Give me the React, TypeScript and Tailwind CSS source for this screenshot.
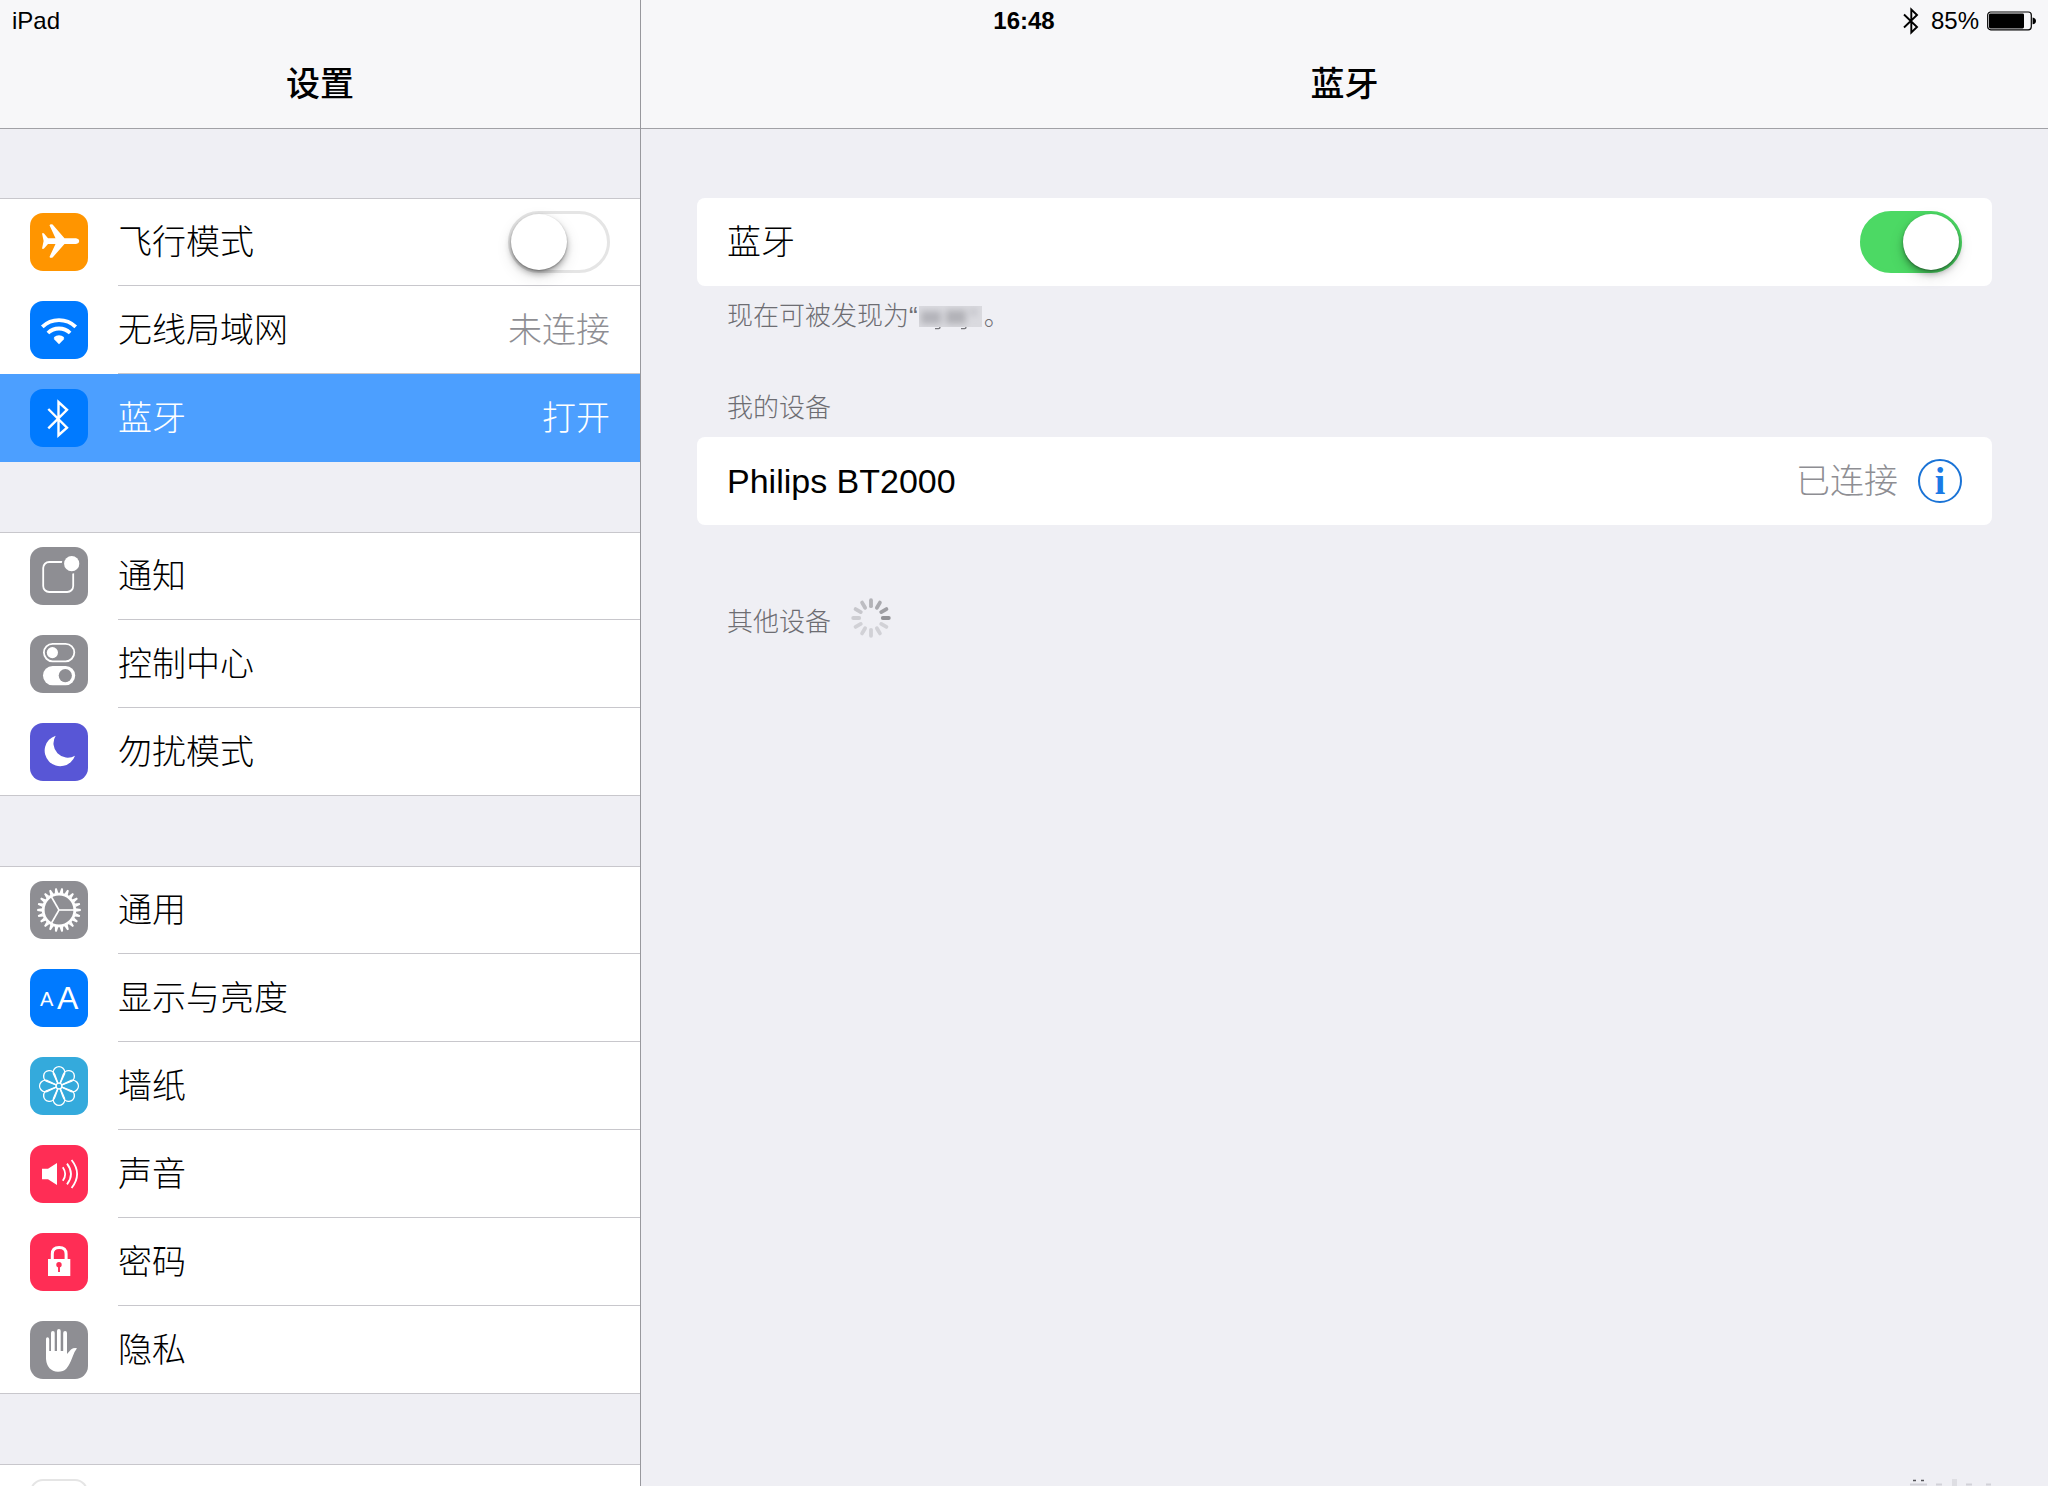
import React, { useState, type ReactNode } from 'react';

const fontStack = "font-['Liberation_Sans','Noto_Sans_CJK_SC',sans-serif]";

function PlaneIcon() {
  return (
    <path
      fill="#fff"
      d="M12 20.3H13.8L18 25.2H25.5L19.5 12.2Q20.5 10.6 22.6 11.6L34.5 25.2H46Q49.2 25.8 49.2 28Q49.2 30.4 46 30.9H34.5L22.6 44.5Q20.5 45.4 19.5 43.9L25.5 30.9H18L13.8 35.8H12L13.6 28Z"
    />
  );
}

function WifiIcon() {
  return (
    <g fill="none" stroke="#fff" strokeWidth="3.8">
      <path d="M12.3 25.9A24 24 0 0 1 45.7 25.9" />
      <path d="M17.9 32A16 16 0 0 1 40.1 32" />
      <path d="M23.6 37.8A8 8 0 0 1 34.4 37.8L29 43.3Z" fill="#fff" stroke="none" />
      <path d="M24.4 37A8 8 0 0 1 33.6 37" strokeWidth="2" />
    </g>
  );
}

function BluetoothIcon() {
  return (
    <path
      fill="none"
      stroke="#fff"
      strokeWidth="2.4"
      d="M18.3 20L37 38.6L28.5 46.2V13L37 20.8L18.3 39.4"
    />
  );
}

function NotificationIcon() {
  return (
    <g>
      <rect x="13.2" y="15" width="30" height="30" rx="6" fill="none" stroke="#fff" strokeWidth="1.8" />
      <circle cx="41.7" cy="16.7" r="10" fill="#8e8e93" />
      <circle cx="41.7" cy="16.7" r="7.6" fill="#fff" />
    </g>
  );
}

function ControlIcon() {
  return (
    <g>
      <rect x="13.9" y="8.9" width="30.4" height="17.4" rx="8.7" fill="none" stroke="#fff" strokeWidth="1.8" />
      <circle cx="22.4" cy="17.6" r="5.6" fill="#fff" />
      <rect x="13" y="31" width="32.2" height="19.2" rx="9.6" fill="#fff" />
      <circle cx="35.3" cy="40.6" r="6.6" fill="#8e8e93" />
    </g>
  );
}

function MoonIcon() {
  return <path fill="#fff" d="M25.7 12.7A14.3 14.3 0 0 0 45 32.7A15.6 15.6 0 1 1 25.7 12.7Z" />;
}

function GearIcon() {
  return (
    <g stroke="#fff" fill="none">
      <circle cx="29" cy="29" r="15.8" strokeWidth="2.8" />
      {Array.from({ length: 22 }, (_, i) => (
        <path
          key={i}
          d="M45.8 27.2L50.8 28.1V29.9L45.8 30.8Z"
          fill="#fff"
          stroke="none"
          transform={`rotate(${(i * 360) / 22} 29 29)`}
        />
      ))}
      {[0, 120, 240].map((a) => (
        <path key={a} d="M29 29H44" strokeWidth="1.6" transform={`rotate(${a} 29 29)`} />
      ))}
    </g>
  );
}

function DisplayIcon() {
  return (
    <g fill="#fff" className="font-['Liberation_Sans',sans-serif]">
      <text x="10" y="37" fontSize="20">A</text>
      <text x="27" y="40" fontSize="32">A</text>
    </g>
  );
}

function FlowerIcon() {
  return (
    <g stroke="#fff" fill="none" strokeWidth="1.4">
      <circle cx="29" cy="29" r="2.9" />
      {Array.from({ length: 8 }, (_, i) => (
        <path
          key={i}
          d="M27.8 26.2L24.2 18.4A5.7 5.7 0 1 1 33.8 18.4L30.2 26.2"
          transform={`rotate(${i * 45} 29 29)`}
        />
      ))}
    </g>
  );
}

function SoundIcon() {
  return (
    <g fill="none" stroke="#fff" strokeWidth="1.8">
      <path d="M12 23.7H18L27 18V40L18 34.3H12Z" fill="#fff" stroke="none" />
      <path d="M32.8 22.2Q37.6 29 32.8 35.8" />
      <path d="M37 18.6Q45 29 37 39.4" />
      <path d="M41.6 15Q52.6 29 41.6 43" />
    </g>
  );
}

function LockIcon() {
  return (
    <g>
      <path d="M22.3 27V21Q22.3 14.4 29.2 14.4T36.1 21V27" fill="none" stroke="#fff" strokeWidth="3" />
      <rect x="18" y="26" width="22.3" height="17" fill="#fff" />
      <circle cx="29" cy="31.7" r="2.7" fill="#ff2d55" />
      <path d="M29 32V39" stroke="#ff2d55" strokeWidth="1.9" />
    </g>
  );
}

function HandIcon() {
  return (
    <path
      fill="#fff"
      d="M16 18Q16 16.2 17.5 16.2T19.2 18V30H21V12Q21 10 22.9 10T24.7 12V30H27V10Q27 8 28.9 8T30.7 10V30H33.2V12Q33.2 10 35.1 10T37 12V33L41 28.5Q44 26.4 47 27.3Q44 31 42.5 36Q39.5 44 36.5 47.5Q33.5 50.8 28 50.8Q17 50 16 38Z"
    />
  );
}

function Tile({ color, children }: { color: string; children?: ReactNode }) {
  return (
    <span className={`block size-[58px] shrink-0 rounded-[13px] ${color}`}>
      <svg viewBox="0 0 58 58" className="size-full" aria-hidden="true">
        {children}
      </svg>
    </span>
  );
}

function Switch({ id, initial }: { id: string; initial: boolean }) {
  const [on, setOn] = useState(initial);
  return (
    <input
      id={id}
      type="checkbox"
      role="switch"
      checked={on}
      onChange={(e) => setOn(e.target.checked)}
      className="flex h-[62px] w-[102px] shrink-0 appearance-none items-center rounded-full border-[3px] border-[#e5e5e5] bg-white before:block before:size-14 before:rounded-full before:bg-white before:shadow-[0_4px_6px_rgba(0,0,0,0.3),0_1px_2px_rgba(0,0,0,0.3),0_6px_16px_rgba(0,0,0,0.12)] checked:justify-end checked:border-[#4cd964] checked:bg-[#4cd964]"
    />
  );
}

type Item = {
  id: string;
  label: string;
  color: string;
  icon?: ReactNode;
  value?: string;
  toggle?: boolean;
  selected?: boolean;
};

const groups: Item[][] = [
  [
    { id: 'airplane', label: '飞行模式', color: 'bg-[#ff9500]', icon: <PlaneIcon />, toggle: true },
    { id: 'wlan', label: '无线局域网', color: 'bg-[#007aff]', icon: <WifiIcon />, value: '未连接' },
    { id: 'bluetooth', label: '蓝牙', color: 'bg-[#007aff]', icon: <BluetoothIcon />, value: '打开', selected: true },
  ],
  [
    { id: 'notifications', label: '通知', color: 'bg-[#8e8e93]', icon: <NotificationIcon /> },
    { id: 'control', label: '控制中心', color: 'bg-[#8e8e93]', icon: <ControlIcon /> },
    { id: 'dnd', label: '勿扰模式', color: 'bg-[#5856d6]', icon: <MoonIcon /> },
  ],
  [
    { id: 'general', label: '通用', color: 'bg-[#8e8e93]', icon: <GearIcon /> },
    { id: 'display', label: '显示与亮度', color: 'bg-[#007aff]', icon: <DisplayIcon /> },
    { id: 'wallpaper', label: '墙纸', color: 'bg-[#34aadc]', icon: <FlowerIcon /> },
    { id: 'sound', label: '声音', color: 'bg-[#ff2d55]', icon: <SoundIcon /> },
    { id: 'passcode', label: '密码', color: 'bg-[#ff2d55]', icon: <LockIcon /> },
    { id: 'privacy', label: '隐私', color: 'bg-[#8e8e93]', icon: <HandIcon /> },
  ],
  [{ id: 'icloud', label: 'iCloud', color: 'bg-white border-2 border-[#e5e5e5]' }],
];

function Row({ item, divider }: { item: Item; divider: boolean }) {
  const body = (
    <>
      <Tile color={item.color}>{item.icon}</Tile>
      <span
        className={`flex h-full flex-1 items-center justify-between border-b pr-[30px] ${
          divider ? 'border-[#c8c7cc]' : 'border-transparent'
        }`}
      >
        <span>{item.label}</span>
        {item.value && (
          <span className={item.selected ? 'text-white' : 'text-[#8e8e93]'}>{item.value}</span>
        )}
        {item.toggle && <Switch id={item.id} initial={false} />}
      </span>
    </>
  );
  const style = 'flex h-[88px] items-center gap-[30px] pl-[30px]';
  if (item.toggle) {
    return (
      <label htmlFor={item.id} className={style}>
        {body}
      </label>
    );
  }
  return (
    <a
      href={`#${item.id}`}
      aria-current={item.selected ? 'page' : undefined}
      className={`${style} ${item.selected ? 'bg-[#4c9fff] text-white' : ''}`}
    >
      {body}
    </a>
  );
}

function StatusBar() {
  return (
    <div className="absolute inset-x-0 top-0 grid h-[42px] grid-cols-3 items-center px-3 text-2xl">
      <span>iPad</span>
      <time className="text-center font-bold">16:48</time>
      <span className="flex items-center justify-end">
        <svg width="16" height="28" viewBox="0 0 16 28" className="mr-3" role="img" aria-label="蓝牙">
          <path
            d="M1 7.5L14 20L8.3 25.5V2.5L14 8L1 20.5"
            fill="none"
            stroke="#000"
            strokeWidth="1.9"
          />
        </svg>
        <span className="mr-2">85%</span>
        <svg width="49" height="20" viewBox="0 0 49 20" role="img" aria-label="电量">
          <rect x="0.7" y="1" width="43.6" height="17.8" rx="3" fill="none" stroke="#000" strokeWidth="1.2" />
          <rect x="2" y="2.4" width="35" height="15" rx="1.4" />
          <path d="M45.6 6.5Q49 7.2 49 10T45.6 13.3Z" />
        </svg>
      </span>
    </div>
  );
}

function Title({ children }: { children: ReactNode }) {
  return (
    <header className="flex h-[129px] shrink-0 items-center justify-center border-b border-[#a1a1a6] bg-[#f7f7f9] pt-10">
      <h1 className="text-[34px] leading-[44px] font-medium">{children}</h1>
    </header>
  );
}

function Spinner() {
  const shades = [0.46, 0.4, 0.35, 0.3, 0.25, 0.2, 0.17, 0.15, 0.15, 0.15, 0.15, 0.15];
  return (
    <svg width="40" height="40" viewBox="0 0 40 40" role="img" aria-label="正在搜索">
      {shades.map((o, i) => (
        <path
          key={i}
          d="M31.8 20H37.8"
          stroke="#28282c"
          strokeOpacity={o}
          strokeWidth="3.8"
          strokeLinecap="round"
          transform={`rotate(${-30 * i} 20 20)`}
        />
      ))}
    </svg>
  );
}

function MaskedName() {
  return (
    <svg width="66" height="28" viewBox="0 0 66 28" className="inline-block align-middle" aria-hidden="true">
      <defs>
        <filter id="soft" x="-10%" y="-20%" width="120%" height="140%">
          <feGaussianBlur stdDeviation="3" />
        </filter>
        <clipPath id="box">
          <rect x="1" y="2" width="63" height="21" />
        </clipPath>
      </defs>
      <g clipPath="url(#box)">
        <rect x="1" y="2" width="63" height="21" fill="#dadadf" />
        <g filter="url(#soft)">
          <rect x="3" y="7" width="20" height="13" fill="#b4b4ba" />
          <rect x="28" y="6" width="20" height="14" fill="#b2b2b8" />
          <rect x="52" y="4" width="7" height="8" fill="#c6c6cc" />
        </g>
      </g>
      <path d="M17 24.6H20.6Q22 24.6 22 23M43 24.6H46.6Q48 24.6 48 23" fill="none" stroke="#77777c" strokeWidth="1.4" />
    </svg>
  );
}

export default function App() {
  return (
    <div
      lang="zh-CN"
      className={`relative grid h-screen grid-cols-[5fr_11fr] overflow-hidden bg-[#efeff4] text-[34px] leading-[44px] font-light text-black ${fontStack}`}
    >
      <aside className="flex min-h-0 flex-col overflow-hidden">
        <Title>设置</Title>
        <nav className="flex flex-col gap-[70px] pt-[69px]">
          {groups.map((group) => (
            <div
              key={group[0].id}
              className="bg-white shadow-[inset_0_1px_0_#c8c7cc,inset_0_-1px_0_#c8c7cc]"
            >
              {group.map((item, i) => (
                <Row key={item.id} item={item} divider={i < group.length - 1} />
              ))}
            </div>
          ))}
        </nav>
      </aside>

      <main className="flex min-h-0 flex-col overflow-hidden border-l border-[#98989d]">
        <Title>蓝牙</Title>
        <div className="flex flex-1 flex-col px-14 pt-[69px]">
          <label
            htmlFor="bluetooth-power"
            className="flex h-[88px] items-center justify-between rounded-lg bg-white px-[30px]"
          >
            <span>蓝牙</span>
            <Switch id="bluetooth-power" initial />
          </label>
          <p className="mt-3 px-[30px] text-[26px] leading-9 text-[#6d6d72]">
            现在可被发现为“<MaskedName />。
          </p>

          <h2 className="mt-14 px-[30px] text-[26px] leading-9 text-[#6d6d72]">我的设备</h2>
          <div className="mt-[11px] flex h-[88px] items-center rounded-lg bg-white px-[30px]">
            <span className="flex-1">Philips BT2000</span>
            <span className="mr-5 text-[#8e8e93]">已连接</span>
            <button
              type="button"
              aria-label="Philips BT2000 详细信息"
              className="flex size-11 items-center justify-center rounded-full border-2 border-[#1a73d6] font-['Liberation_Serif',serif] text-[38px] leading-10 font-bold text-[#1a7ae6]"
            >
              i
            </button>
          </div>

          <div className="mt-[71px] flex items-center gap-5 px-[30px]">
            <h2 className="pt-2 text-[26px] leading-9 text-[#6d6d72]">其他设备</h2>
            <Spinner />
          </div>

          <svg width="110" height="7" viewBox="0 0 110 7" className="mt-auto self-end" aria-hidden="true">
            <path d="M31 1.5H34M39 1.5H42" stroke="#55555a" strokeWidth="1.6" />
            <path d="M28 5.5H45M54 5.5H60M84 5.5H90M104 5.5H109" stroke="#d2d2d8" strokeWidth="2" />
            <path d="M70 0H75V7H70Z" fill="#dedee3" />
          </svg>
        </div>
      </main>

      <StatusBar />
    </div>
  );
}
